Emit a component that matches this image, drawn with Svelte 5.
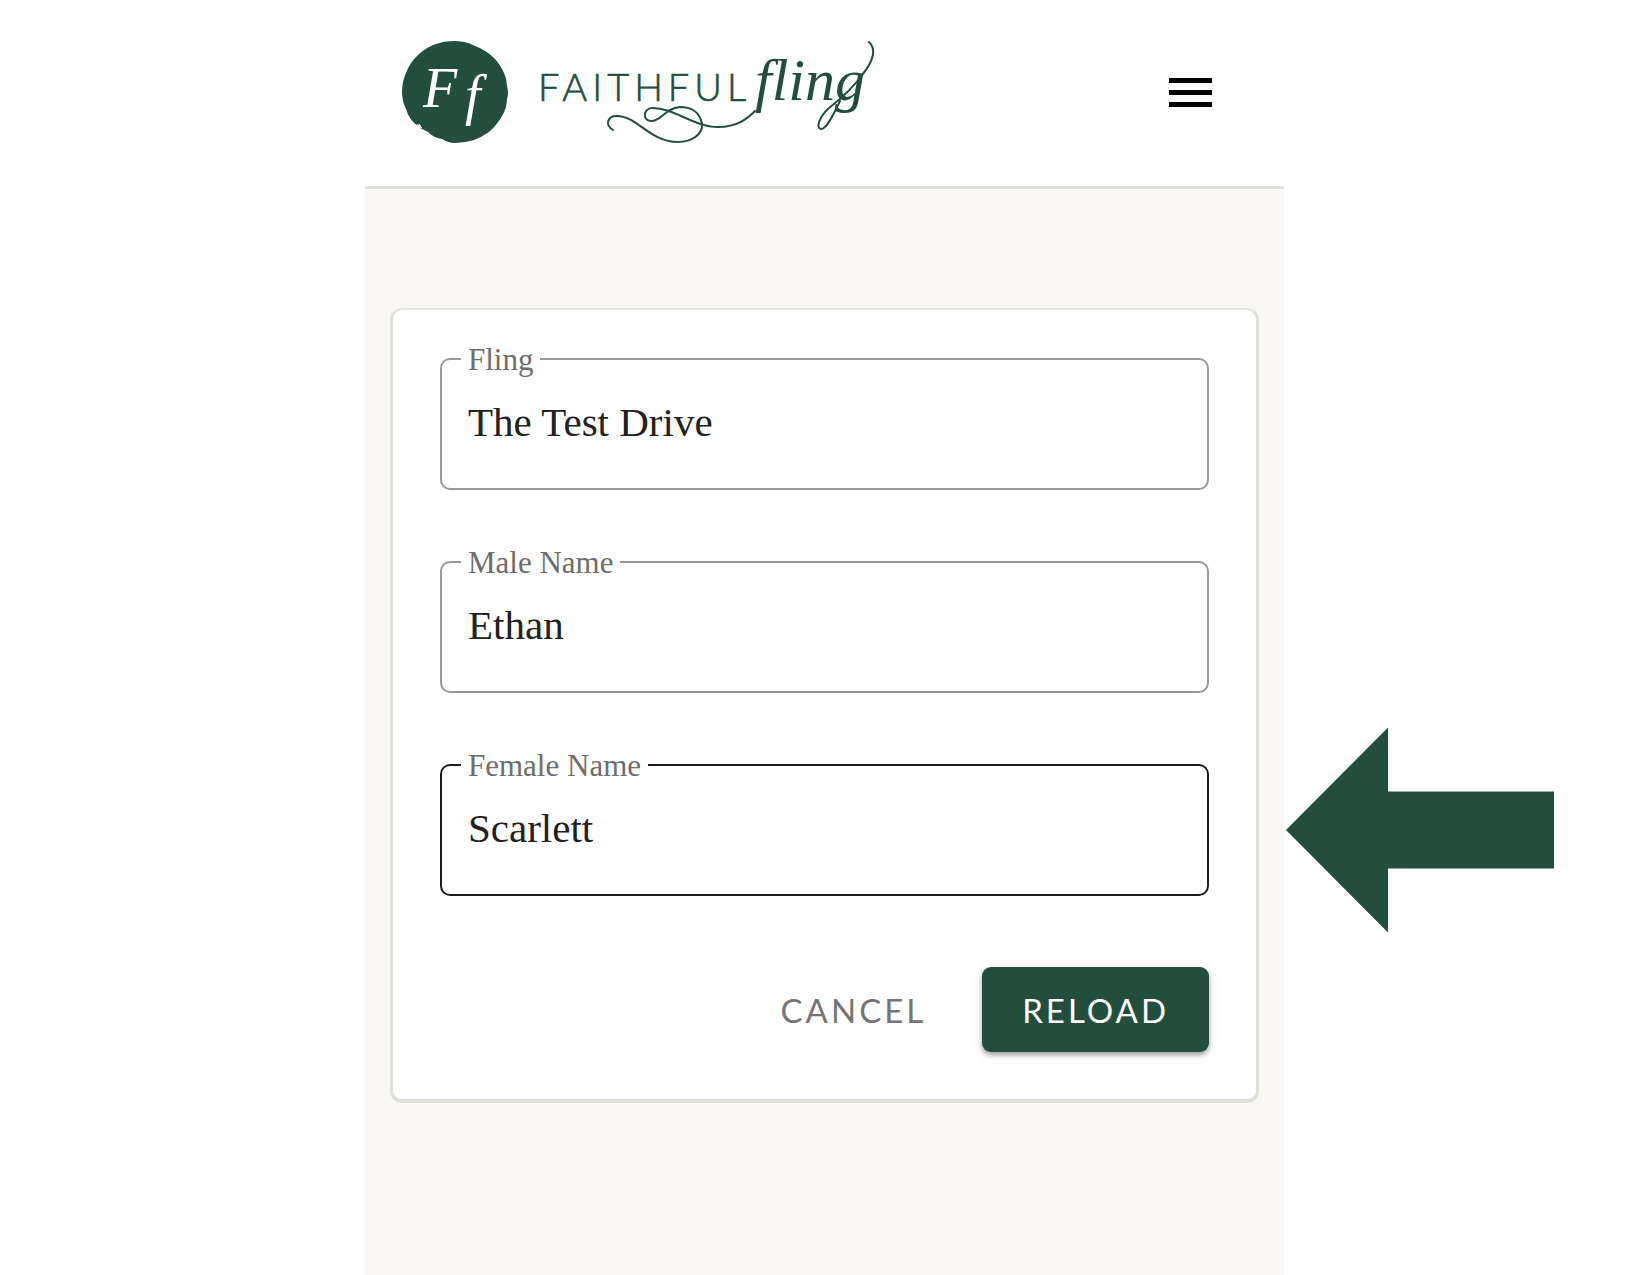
<script>
let fields = $state([
  { id: 'fling', label: 'Fling', value: 'The Test Drive' },
  { id: 'male-name', label: 'Male Name', value: 'Ethan' },
  { id: 'female-name', label: 'Female Name', value: 'Scarlett', active: true },
]);
</script>

<div class="page">
  <div class="screen">
    <header class="topbar">
      <a class="logo" href="/" aria-label="Faithful Fling">
        <svg width="480" height="112" viewBox="400 36 480 112">
          <path
            class="seal"
            d="M453 41 Q459 41 464 42 Q470 43 475 46 Q486 50 494 58 Q500 64 504 73 Q507 79 507 86 Q509 93 507 99 Q507 108 502 116 Q497 125 489 132 Q482 137 474 140 Q464 143 455 143 Q448 143 442 139 Q434 138 428 132 L420 128 L421 126 L417 124 L418 126 Q409 120 406 109 Q402 101 402 92 Q402 82 406 73 Q410 62 419 54 Q427 47 436 44 Q444 41 453 41 Z"
          />
          <path class="nick" d="M417 125 L422 128 M419 124 L421 127" />
          <text class="initial" x="423" y="107">F</text>
          <text class="initial" x="465" y="114">f</text>
          <text class="wordmark" x="538" y="101">FAITHFUL</text>
          <text class="script" x="755" y="100">fling</text>
          <path
            class="flourish"
            d="M613 130 C605 125 607 116 617 116 C637 116 650 142 678 142 C692 142 703 134 702 124 C700 112 691 107 680 107 C665 108 662 121 651 121 C642 121 643 108 653 108 C674 108 694 127 718 127 C738 127 748 118 755 111"
          />
          <path
            class="flourish"
            d="M840 101 C834 113 827 129 821 129 C815 128 820 116 829 108 C843 97 853 88 862 75 C873 62 877 49 869 42"
          />
        </svg>
      </a>
      <button class="menu" type="button" aria-label="Menu">
        <svg width="43" height="29" viewBox="0 0 43 29">
          <path d="M0 0h43v5H0zM0 12h43v5H0zM0 24h43v5H0z" />
        </svg>
      </button>
    </header>

    <main>
      <form class="card" onsubmit={(e) => e.preventDefault()}>
        {#each fields as field (field.id)}
          <div class="field" class:active={field.active}>
            <label for={field.id}>{field.label}</label>
            <input id={field.id} type="text" autocomplete="off" spellcheck="false" bind:value={field.value} />
            {#if field.active}
              <svg class="pointer" width="268" height="205" viewBox="0 0 268 205" aria-hidden="true">
                <path d="M0 102.5 L102 0 V64 H268 V141 H102 V205 Z" />
              </svg>
            {/if}
          </div>
        {/each}

        <div class="actions">
          <button class="btn" type="button">CANCEL</button>
          <button class="btn primary" type="submit">RELOAD</button>
        </div>
      </form>
    </main>
  </div>
</div>

<style>
  :global(body) {
    margin: 0;
    background: #fff;
  }

  .page {
    display: grid;
    grid-template-columns: 365fr 919fr 366fr;
    min-height: 100vh;
    overflow-x: hidden;
    font-family: 'Liberation Serif', serif;
  }

  .screen {
    grid-column: 2;
    min-width: 0;
    background: #f9f8f4;
  }

  .topbar {
    display: flex;
    align-items: center;
    justify-content: space-between;
    box-sizing: border-box;
    height: 189px;
    padding: 0 72px 2px 35px;
    background: #fff;
    border-bottom: 3px solid #dfdfdb;
  }

  .logo,
  .logo svg,
  .menu svg {
    display: block;
  }

  .seal {
    fill: #234e3d;
  }

  .nick {
    fill: none;
    stroke: #fff;
    stroke-width: 1;
  }

  .initial {
    font-family: 'Liberation Serif', serif;
    font-size: 56px;
    font-style: italic;
    fill: #fff;
  }

  .wordmark {
    font-family: Lato, sans-serif;
    font-size: 38px;
    font-weight: 300;
    letter-spacing: 5px;
    fill: #234e3d;
    stroke: #234e3d;
    stroke-width: 0.6;
  }

  .script {
    font-family: 'Liberation Serif', serif;
    font-size: 60px;
    font-style: italic;
    fill: #234e3d;
  }

  .flourish {
    fill: none;
    stroke: #234e3d;
    stroke-width: 2;
    stroke-linecap: round;
  }

  .menu {
    padding: 0;
    border: 0;
    background: none;
    cursor: pointer;
  }

  main {
    padding: 119px 25px 48px;
  }

  .card {
    display: flex;
    flex-direction: column;
    gap: 71px;
    padding: 48px 47px 47px;
    background: #fff;
    border: 3px solid #dfdfda;
    border-top: 2px solid #e5e5e1;
    border-bottom-width: 4px;
    border-radius: 12px;
  }

  .field {
    position: relative;
    border: 2px solid #999;
    border-radius: 10px;
  }

  .field.active {
    border-color: #1c1c1c;
  }

  .field label {
    position: absolute;
    top: -17px;
    left: 19px;
    padding: 0 7px;
    background: #fff;
    color: #6e6e6e;
    font-size: 31px;
    line-height: 34px;
  }

  .field input {
    display: block;
    box-sizing: border-box;
    width: 100%;
    height: 128px;
    padding: 38px 26px 42px;
    border: 0;
    outline: 0;
    background: none;
    color: #212121;
    font-family: inherit;
    font-size: 41px;
    line-height: 48px;
  }

  /* callout beside the field that is being edited */
  .pointer {
    position: absolute;
    top: 50%;
    left: calc(100% + 79px);
    transform: translateY(-50%);
    fill: #234e3d;
  }

  .actions {
    display: flex;
    justify-content: flex-end;
    gap: 16px;
  }

  .btn {
    height: 85px;
    padding: 0 40px;
    border: 0;
    border-radius: 9px;
    background: none;
    color: #757575;
    font-family: Lato, sans-serif;
    font-size: 33px;
    letter-spacing: 3px;
    cursor: pointer;
  }

  .btn.primary {
    background: #234e3d;
    color: #fff;
    box-shadow: 0 3px 4px rgba(0, 0, 0, 0.3), 0 2px 12px rgba(0, 0, 0, 0.12);
  }
</style>
